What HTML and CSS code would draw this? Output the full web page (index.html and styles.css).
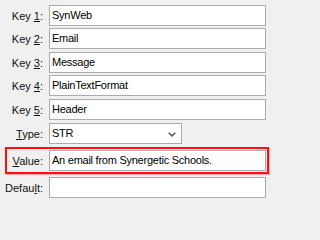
FILE: index.html
```html
<!DOCTYPE html>
<html>
<head>
<meta charset="utf-8">
<link rel="stylesheet" href="styles.css">
</head>
<body>
<div class="form">
  <div class="row"><div class="label">Key <u>1</u>:</div><div class="field">SynWeb</div></div>
  <div class="row tight"><div class="label">Key <u>2</u>:</div><div class="field">Email</div></div>
  <div class="row"><div class="label">Key <u>3</u>:</div><div class="field">Message</div></div>
  <div class="row tight"><div class="label">Key <u>4</u>:</div><div class="field">PlainTextFormat</div></div>
  <div class="row"><div class="label">Key <u>5</u>:</div><div class="field">Header</div></div>
  <div class="row"><div class="label"><u>T</u>ype:</div>
    <div class="field select">STR
      <svg class="chevron" width="8" height="5" viewBox="0 0 8 5"><path d="M0.7 0.7 L4 3.9 L7.3 0.7" fill="none" stroke="#5a5a5a" stroke-width="1.5"/></svg>
    </div>
  </div>
  <div class="row highlight"><div class="label"><u>V</u>alue:</div><div class="field">An email from Synergetic Schools.</div></div>
  <div class="row"><div class="label">Defau<u>l</u>t:</div><div class="field"></div></div>
</div>
</body>
</html>
```
FILE: styles.css
```css
html, body {
  margin: 0;
  padding: 0;
  background: #f0f0f0;
  width: 271px;
  height: 202px;
  overflow: hidden;
}
.form {
  display: flex;
  flex-direction: column;
  padding-top: 5px;
  font-family: "Liberation Sans", Arial, sans-serif;
  font-size: 11px;
  color: #000;
}
.row {
  display: flex;
  align-items: center;
  gap: 6px;
  margin-top: 3px;
}
.row:first-child {
  margin-top: 0;
}
.row.tight {
  margin-top: 2px;
}
.label {
  flex: 0 0 43px;
  text-align: right;
  white-space: nowrap;
  color: #101010;
}
.label u {
  text-underline-offset: 1px;
}
.field {
  flex: 0 0 217px;
  box-sizing: border-box;
  height: 21px;
  line-height: 19px;
  border: 1px solid #acacac;
  background: #fff;
  padding-left: 2px;
  white-space: nowrap;
  overflow: hidden;
  letter-spacing: -0.25px;
}
.select {
  flex: 0 0 133px;
  position: relative;
}
.chevron {
  position: absolute;
  right: 5px;
  top: 8px;
}
.highlight {
  margin-left: 5px;
  width: 258px;
  border: 2px solid #ff1010;
  padding: 1px;
  box-shadow: 0 0 1px 0.5px rgba(255, 80, 80, 0.45);
}
.highlight .label {
  flex: 0 0 35px;
}
```
